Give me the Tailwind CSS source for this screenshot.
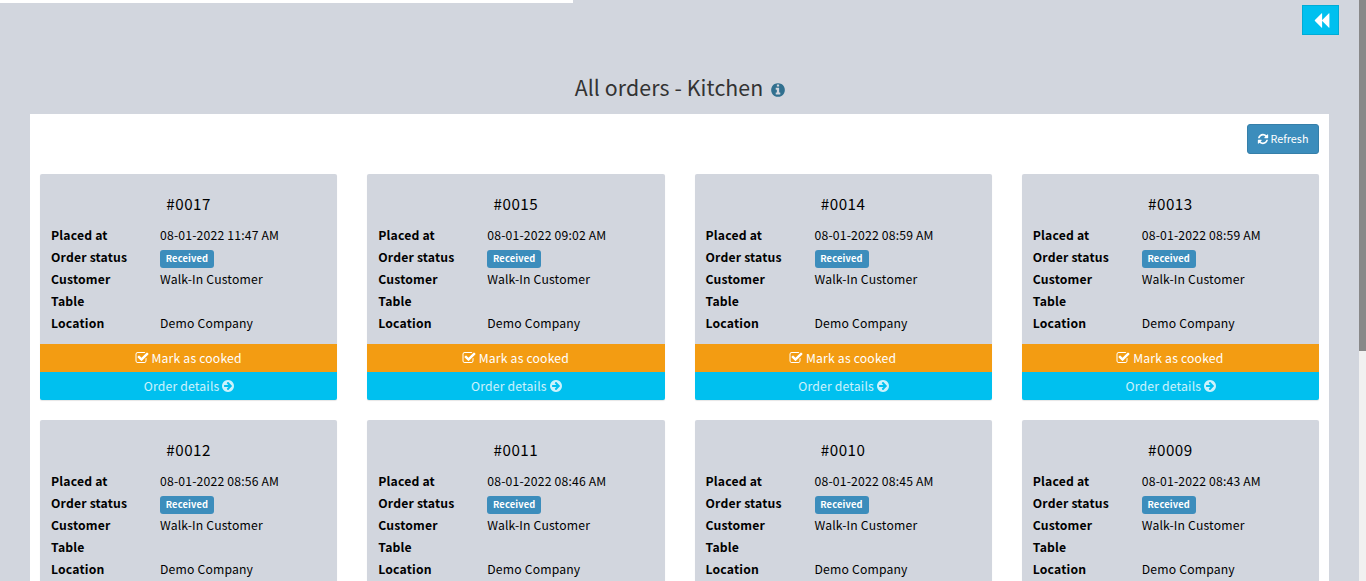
<!DOCTYPE html>
<html lang="en">
<head>
<meta charset="utf-8">
<title>All orders - Kitchen</title>
<script src="https://cdn.jsdelivr.net/npm/@tailwindcss/browser@4"></script>
</head>
<body class="h-[581px] overflow-hidden bg-[#d2d6de] font-['Noto_Sans_CJK_SC','Noto_Sans',sans-serif] text-[12.2px] text-black">
<svg class="hidden">
  <symbol id="backward" viewBox="0 0 1792 1792"><path d="M1683 141q19-19 32-13t13 32v1472q0 26-13 32t-32-13l-710-710q-8-9-13-19v710q0 26-13 32t-32-13l-710-710q-19-19-19-45t19-45l710-710q19-19 32-13t13 32v710q5-11 13-19z"/></symbol>
  <symbol id="refresh" viewBox="0 0 1792 1792"><path d="M1639 1056q0 5-1 7-64 268-268 434.500t-478 166.500q-146 0-282.500-55t-243.500-157l-129 129q-19 19-45 19t-45-19-19-45v-448q0-26 19-45t45-19h448q26 0 45 19t19 45-19 45l-137 137q71 66 161 102t187 36q134 0 250-65t186-179q11-17 53-117 8-23 30-23h192q13 0 22.500 9.500t9.500 22.500zm25-800v448q0 26-19 45t-45 19h-448q-26 0-45-19t-19-45 19-45l138-138q-148-137-349-137-134 0-250 65t-186 179q-11 17-53 117-8 23-30 23h-199q-13 0-22.500-9.500t-9.500-22.500v-7q65-268 270-434.500t480-166.500q146 0 284 55.500t245 156.500l130-129q19-19 45-19t45 19 19 45z"/></symbol>
  <symbol id="info" viewBox="0 0 1792 1792"><path d="M1152 1376v-160q0-14-9-23t-23-9h-96v-512q0-14-9-23t-23-9h-320q-14 0-23 9t-9 23v160q0 14 9 23t23 9h96v320h-96q-14 0-23 9t-9 23v160q0 14 9 23t23 9h448q14 0 23-9t9-23zm-128-896v-160q0-14-9-23t-23-9h-192q-14 0-23 9t-9 23v160q0 14 9 23t23 9h192q14 0 23-9t9-23zm640 416q0 209-103 385.500t-279.500 279.500-385.500 103-385.500-103-279.500-279.500-103-385.500 103-385.500 279.500-279.500 385.500-103 385.500 103 279.500 279.500 103 385.500z"/></symbol>
  <symbol id="arrow" viewBox="0 0 1792 1792"><path d="M1413 896q0-27-18-45l-91-91-362-362q-18-18-45-18t-45 18l-91 91q-18 18-18 45t18 45l189 189h-502q-26 0-45 19t-19 45v128q0 26 19 45t45 19h502l-189 189q-18 18-18 45t18 45l91 91q18 18 45 18t45-18l362-362 91-91q18-18 18-45zm251 0q0 209-103 385.500t-279.500 279.500-385.500 103-385.500-103-279.500-279.500-103-385.500 103-385.500 279.500-279.500 385.500-103 385.500 103 279.500 279.500 103 385.500z" fill-rule="evenodd"/></symbol>
  <symbol id="check" viewBox="0 0 1792 1792"><path d="M1472 930v318q0 119-84.500 203.500t-203.500 84.500h-832q-119 0-203.500-84.500t-84.500-203.500v-832q0-119 84.500-203.500t203.500-84.500h832q63 0 117 25 15 7 18 23 3 17-9 29l-49 49q-10 10-23 10-3 0-9-2-23-6-45-6h-832q-66 0-113 47t-47 113v832q0 66 47 113t113 47h832q66 0 113-47t47-113v-254q0-13 9-22l64-64q10-10 23-10 6 0 12 3 20 8 20 29zm231-489l-814 814q-24 24-57 24t-57-24l-430-430q-24-24-24-57t24-57l110-110q24-24 57-24t57 24l263 263 647-647q24-24 57-24t57 24l110 110q24 24 24 57t-24 57z"/></symbol>
</svg>

<div class="flex h-[581px] overflow-hidden">
  <div class="w-[1359px] shrink-0">
    <div class="h-[3px] w-[573px] bg-white"></div>
    <div class="flex justify-end pt-[2px] pr-5">
      <button class="flex h-[30px] w-[37px] items-center justify-center border border-[#00acd6] bg-[#00c0ef] text-white"><svg class="ml-[2px] size-[17px] fill-current"><use href="#backward"/></svg></button>
    </div>
    <h1 class="mt-[34px] flex h-9 items-center justify-center pl-[2px] whitespace-nowrap text-[21.3px] leading-9 tracking-[0.1px] text-[#333]"><span>All orders - Kitchen</span><svg class="mt-[5px] ml-[7px] size-4 fill-[#31708f]"><use href="#info"/></svg></h1>
    <main class="mt-[9px] ml-[30px] w-[1299px] bg-white p-2.5">
      <div class="flex justify-end">
        <button class="flex h-[30px] w-[72px] items-center justify-center gap-[2px] rounded-[3px] border border-[#367fa9] bg-[#3c8dbc] pr-[1px] text-[10.8px] text-white"><svg class="size-3 fill-current"><use href="#refresh"/></svg><span class="pb-[1px]">Refresh</span></button>
      </div>
      <div id="orders" class="mt-5 grid grid-cols-4 gap-x-[30px] gap-y-5"></div>
    </main>
  </div>
  <div class="w-[7px] bg-[#f1f1f1]"><div class="h-[351px] bg-[#888]"></div></div>
</div>

<template id="card">
  <article class="h-[226px] overflow-hidden rounded-[2px] bg-[#d2d6de] tracking-[0.18px] whitespace-nowrap shadow-[0_1px_1px_rgba(0,0,0,0.1)]">
    <h4 class="h-[50px] pt-[19px] text-center text-[15.2px] leading-5 tracking-[0.5px]" data-number></h4>
    <dl class="grid h-[120px] grid-cols-[109px_1fr] auto-rows-[22px] pl-[11px] leading-[22px]">
      <dt class="font-bold">Placed at</dt><dd data-time></dd>
      <dt class="font-bold">Order status</dt><dd class="flex items-center"><span class="mt-[3px] flex h-[18px] w-[54px] items-center justify-center rounded-[3px] bg-[#3c8dbc] pb-[1px] text-[9.3px] font-bold text-white">Received</span></dd>
      <dt class="font-bold">Customer</dt><dd>Walk-In Customer</dd>
      <dt class="font-bold">Table</dt><dd></dd>
      <dt class="font-bold">Location</dt><dd>Demo Company</dd>
    </dl>
    <a class="flex h-7 items-center justify-center gap-[3px] bg-[#f39c12] pr-[1px] text-white"><svg class="size-3.5 fill-current"><use href="#check"/></svg><span>Mark as cooked</span></a>
    <a class="flex h-7 items-center justify-center bg-[#00c0ef] pl-[2px] text-white/80"><span>Order details</span><svg class="ml-[2px] size-3.5 fill-current"><use href="#arrow"/></svg></a>
  </article>
</template>
<script>
const orders = [['0017','11:47'],['0015','09:02'],['0014','08:59'],['0013','08:59'],['0012','08:56'],['0011','08:46'],['0010','08:45'],['0009','08:43']];
for (const [number, time] of orders) {
  const card = document.getElementById('card').content.cloneNode(true);
  card.querySelector('[data-number]').textContent = '#' + number;
  card.querySelector('[data-time]').textContent = '08-01-2022 ' + time + ' AM';
  document.getElementById('orders').append(card);
}
</script>
</body>
</html>
